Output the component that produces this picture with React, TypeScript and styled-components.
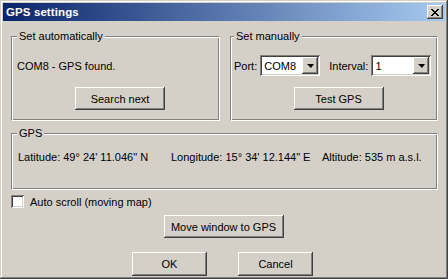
import styled, { createGlobalStyle } from "styled-components"

const Global = createGlobalStyle`
    html, body {
        margin: 0;
        padding: 0;
        background: #d4d0c8;
    }
    body {
        font-family: "Liberation Sans", Arial, sans-serif;
        font-size: 11px;
        color: #000;
    }
`

const face = "#d4d0c8"

const Window = styled.div`
    width: 448px;
    height: 279px;
    box-sizing: border-box;
    padding: 3px;
    background: ${face};
    display: flex;
    flex-direction: column;
    box-shadow: inset -1px -1px 0 #404040, inset 1px 1px 0 ${face},
        inset -2px -2px 0 #808080, inset 2px 2px 0 #fff;
`

const TitleBar = styled.div`
    height: 18px;
    display: flex;
    align-items: center;
    justify-content: space-between;
    padding: 0 2px 0 3px;
    background: linear-gradient(to right, #0a246a, #a6caf0);
    color: #fff;
    font-weight: bold;
    font-size: 11.5px;
    letter-spacing: 0.1px;
`

const raised = `
    background: ${face};
    box-shadow: inset -1px -1px 0 #404040, inset 1px 1px 0 #fff,
        inset -2px -2px 0 #808080, inset 2px 2px 0 ${face};
`

const sunken = `
    box-shadow: inset 1px 1px 0 #808080, inset -1px -1px 0 #fff,
        inset 2px 2px 0 #404040, inset -2px -2px 0 ${face};
`

const CloseBtn = styled.div`
    width: 16px;
    height: 14px;
    display: flex;
    align-items: center;
    justify-content: center;
    ${raised}
`

const Body = styled.div`
    flex: 1;
    display: flex;
    flex-direction: column;
    padding: 9px 7px 0 8px;
`

const TopRow = styled.div`
    display: flex;
    gap: 10px;
`

const Group = styled.fieldset<{ $w?: number; $h: number }>`
    margin: 0;
    padding: 0;
    min-width: 0;
    box-sizing: border-box;
    width: ${(p) => (p.$w ? `${p.$w}px` : "auto")};
    flex: ${(p) => (p.$w ? "none" : "1")};
    height: ${(p) => p.$h}px;
    border: 1px solid;
    border-color: #808080 #fff #fff #808080;
    box-shadow: inset 1px 1px 0 #fff, inset -1px -1px 0 #808080;
`

const Legend = styled.legend<{ $indent: number }>`
    margin-left: ${(p) => p.$indent}px;
    padding: 0 2px;
    line-height: 13px;
    background: ${face};
`

const GroupInner = styled.div`
    display: flex;
    flex-direction: column;
    padding: 12px 0 0 5px;
`

const InfoLine = styled.div`
    height: 21px;
    display: flex;
    align-items: center;
`

const FieldRow = styled.div`
    height: 21px;
    display: flex;
    align-items: center;
    margin-left: -2px;
`

const Label = styled.span<{ $gap?: number }>`
    margin-left: ${(p) => p.$gap ?? 0}px;
    margin-right: 3px;
`

const Button = styled.div<{ $w: number; $h?: number }>`
    width: ${(p) => p.$w}px;
    height: ${(p) => p.$h ?? 23}px;
    display: flex;
    align-items: center;
    justify-content: center;
    box-sizing: border-box;
    ${raised}
`

const GroupButton = styled(Button)`
    margin-top: 11px;
    align-self: center;
    position: relative;
    left: 2px;
`

const Combo = styled.div`
    width: 60px;
    height: 21px;
    box-sizing: border-box;
    padding: 2px;
    background: #fff;
    display: flex;
    ${sunken}
`

const ComboValue = styled.span`
    flex: 1;
    display: flex;
    align-items: center;
    padding-left: 2px;
`

const DropBtn = styled.div`
    width: 16px;
    height: 17px;
    display: flex;
    align-items: center;
    justify-content: center;
    ${raised}
`

const Arrow = styled.div`
    width: 0;
    height: 0;
    border-left: 4px solid transparent;
    border-right: 3px solid transparent;
    border-top: 4px solid #000;
    margin-top: 1px;
`

const GpsGroup = styled(Group)`
    margin-top: 6px;
`

const GpsLine = styled.div`
    display: grid;
    grid-template-columns: 153px 151px auto;
    padding: 11px 0 0 6px;
    line-height: 13px;
`

const CheckRow = styled.label`
    display: flex;
    align-items: center;
    gap: 6px;
    margin-top: 5px;
    height: 13px;
`

const CheckBox = styled.span`
    width: 13px;
    height: 13px;
    box-sizing: border-box;
    background: #fff;
    ${sunken}
`

const Center = styled.div`
    display: flex;
    justify-content: center;
    padding-right: 2px;
`

const MoveRow = styled(Center)`
    margin-top: 7px;
`

const ActionRow = styled(Center)`
    margin-top: 14px;
    gap: 31px;
    padding-right: 4px;
`

const CloseIcon = () => (
    <svg width="8" height="7" viewBox="0 0 8 7" shapeRendering="crispEdges">
        <path
            d="M0 0h2v1h-2zM6 0h2v1h-2zM1 1h2v1h-2zM5 1h2v1h-2zM2 2h4v1h-4zM3 3h2v1h-2zM2 4h4v1h-4zM1 5h2v1h-2zM5 5h2v1h-2zM0 6h2v1h-2zM6 6h2v1h-2z"
            fill="#000"
        />
    </svg>
)

const ComboBox = ({ value }: { value: string }) => (
    <Combo>
        <ComboValue>{value}</ComboValue>
        <DropBtn>
            <Arrow />
        </DropBtn>
    </Combo>
)

const App = () => {
    return (
        <Window>
            <Global />
            <TitleBar>
                <span>GPS settings</span>
                <CloseBtn>
                    <CloseIcon />
                </CloseBtn>
            </TitleBar>
            <Body>
                <TopRow>
                    <Group $w={209} $h={91}>
                        <Legend $indent={5}>Set automatically</Legend>
                        <GroupInner>
                            <InfoLine>COM8 - GPS found.</InfoLine>
                            <GroupButton $w={90}>Search next</GroupButton>
                        </GroupInner>
                    </Group>
                    <Group $h={91}>
                        <Legend $indent={3}>Set manually</Legend>
                        <GroupInner>
                            <FieldRow>
                                <Label>Port:</Label>
                                <ComboBox value="COM8" />
                                <Label $gap={9}>Interval:</Label>
                                <ComboBox value="1" />
                            </FieldRow>
                            <GroupButton $w={90}>Test GPS</GroupButton>
                        </GroupInner>
                    </Group>
                </TopRow>
                <GpsGroup $h={52}>
                    <Legend $indent={5}>GPS</Legend>
                    <GpsLine>
                        <span>Latitude: 49° 24' 11.046" N</span>
                        <span>Longitude: 15° 34' 12.144" E</span>
                        <span>Altitude: 535 m a.s.l.</span>
                    </GpsLine>
                </GpsGroup>
                <CheckRow>
                    <CheckBox />
                    <span>Auto scroll (moving map)</span>
                </CheckRow>
                <MoveRow>
                    <Button $w={120}>Move window to GPS</Button>
                </MoveRow>
                <ActionRow>
                    <Button $w={75} $h={24}>OK</Button>
                    <Button $w={75} $h={24}>Cancel</Button>
                </ActionRow>
            </Body>
        </Window>
    )
}

export default App
